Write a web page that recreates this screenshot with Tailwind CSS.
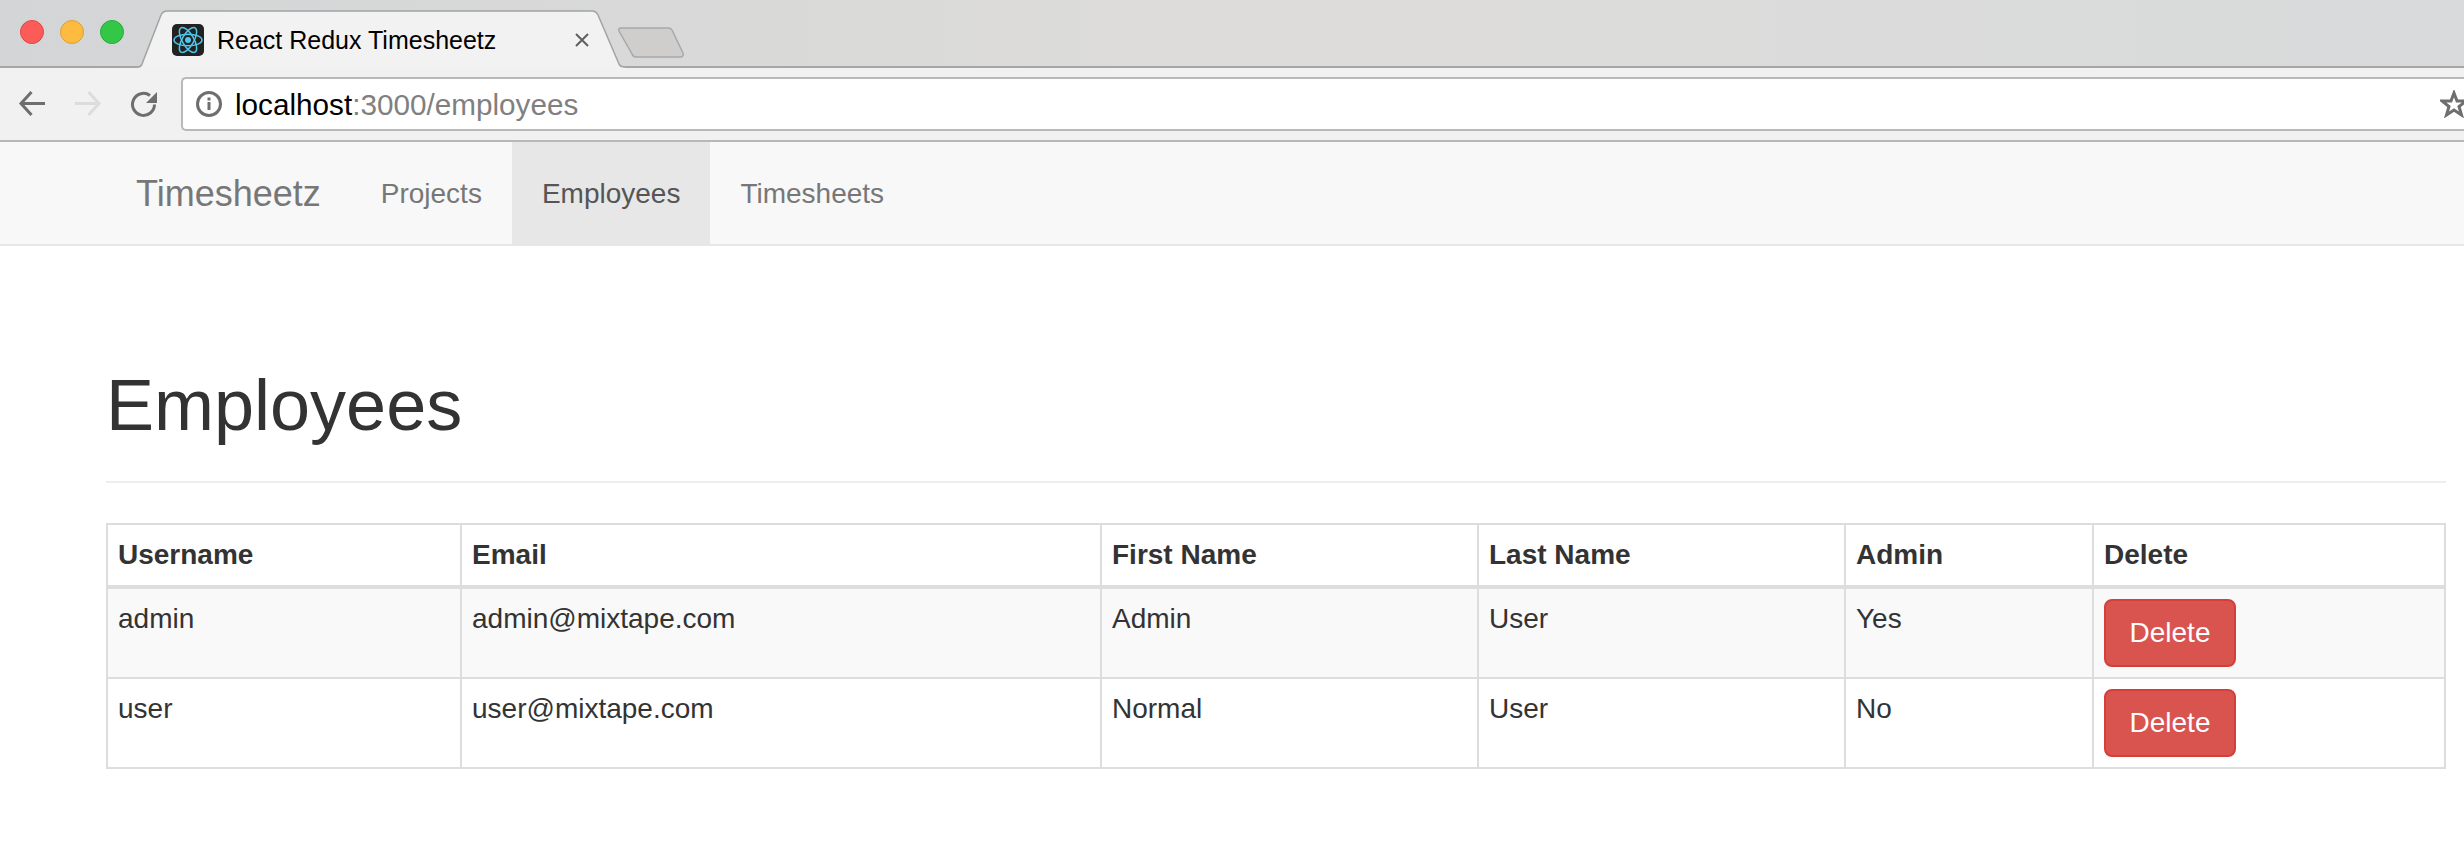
<!DOCTYPE html>
<html lang="en">
<head>
  <meta charset="UTF-8" />
  <title>React Redux Timesheetz</title>
  <script src="https://cdn.jsdelivr.net/npm/@tailwindcss/browser@4"></script>
</head>
<body class="bg-white h-[868px] overflow-hidden font-['Liberation_Sans',Arial,sans-serif] text-[#333] text-[28px] leading-[40px]">

  <!-- tab strip -->
  <div class="relative h-[68px] border-b-2 border-[#a6a6a6] bg-gradient-to-r from-[#d3d5d6] via-[#dddcda] to-[#d8dadb]">
    <div class="absolute left-[20px] top-[20px] flex gap-[16px]">
      <span class="w-[24px] h-[24px] rounded-full bg-[#fc5b57] border border-[#df4744]"></span>
      <span class="w-[24px] h-[24px] rounded-full bg-[#fdbc40] border border-[#dea034]"></span>
      <span class="w-[24px] h-[24px] rounded-full bg-[#33c748] border border-[#27aa35]"></span>
    </div>
    <svg class="absolute left-[138px] top-[10px]" width="490" height="58" viewBox="0 0 490 58">
      <path d="M0 58 V57 Q3 57 4 54 L23 5 Q25 1 29 1 L454 1 Q458 1 460 5 L481 54 Q482 57 487 57 V58 Z" fill="#f2f2f2"/>
      <path d="M0 57 Q3 57 4 54 L23 5 Q25 1 29 1 L454 1 Q458 1 460 5 L481 54 Q482 57 487 57" fill="none" stroke="#a3a3a3" stroke-width="1.5"/>
    </svg>
    <svg class="absolute left-[616px] top-[26px]" width="68" height="34" viewBox="0 0 68 34">
      <path d="M3 5 Q2 2 5 2 L52 2 Q55 2 56 4 L67 27 Q68 31 64 31 L20 31 Q17 31 16 28 Z" fill="#cfcecd" stroke="#a8a8a8" stroke-width="1.5"/>
    </svg>
    <div class="absolute left-[172px] top-[24px] w-[32px] h-[32px] rounded-[5px] bg-[#222] flex items-center justify-center">
      <svg width="30" height="30" viewBox="0 0 30 30" fill="none" stroke="#50c8ee" stroke-width="1.5">
        <ellipse cx="15" cy="15" rx="14" ry="5.800"/>
        <ellipse cx="15" cy="15" rx="14" ry="5.800" transform="rotate(60 15 15)"/>
        <ellipse cx="15" cy="15" rx="14" ry="5.800" transform="rotate(120 15 15)"/>
        <circle cx="15" cy="15" r="3" fill="#50c8ee" stroke="none"/>
      </svg>
    </div>
    <span class="absolute left-[217px] top-[20px] text-[25px] text-black whitespace-nowrap">React Redux Timesheetz</span>
    <svg class="absolute left-[575px] top-[33px]" width="14" height="14" viewBox="0 0 14 14" stroke="#5f5f5f" stroke-width="2" fill="none">
      <path d="M1 1 L13 13 M13 1 L1 13"/>
    </svg>
  </div>

  <!-- toolbar -->
  <div class="relative h-[74px] bg-[#f1f1f1] border-b-2 border-[#b8b8b8] flex items-center">
    <div class="flex items-center w-[181px] shrink-0 pl-[18px] gap-[28px]">
      <svg width="28" height="28" viewBox="0 0 28 28" fill="none" stroke="#6e6e6e" stroke-width="3">
        <path d="M27 13.500 H3 M13.500 2 L3 13.500 L13.500 25"/>
      </svg>
      <svg width="28" height="28" viewBox="0 0 28 28" fill="none" stroke="#dcdcdc" stroke-width="3">
        <path d="M1 13.500 H25 M14.500 2 L25 13.500 L14.500 25"/>
      </svg>
      <svg width="28" height="28" viewBox="0 0 28 28" fill="none" stroke="#6e6e6e" stroke-width="3">
        <path d="M24.500 14.500 A11 11 0 1 1 20 5.500"/>
        <path d="M27 2 V13 H16 Z" fill="#6e6e6e" stroke="none"/>
      </svg>
    </div>
    <div class="flex-1 h-[54px] bg-white border-2 border-r-0 border-[#b9b9b9] rounded-l-[5px] flex items-center pl-[12px] relative">
      <svg width="28" height="28" viewBox="0 0 28 28" fill="none" class="shrink-0">
        <circle cx="14" cy="14" r="11.500" stroke="#6e6e6e" stroke-width="3"/>
        <rect x="12.500" y="12" width="3" height="8" fill="#6e6e6e"/>
        <rect x="12.500" y="7.500" width="3" height="3" fill="#6e6e6e"/>
      </svg>
      <span class="ml-[12px] mt-[2px] text-[29.7px] text-black whitespace-nowrap">localhost<span class="text-[#808080]">:3000/employees</span></span>
      <svg class="absolute left-[2257px] top-[11px]" width="28" height="28" viewBox="0 0 28 28" fill="none" stroke="#6e6e6e" stroke-width="3">
        <path d="M14 3 L17 11 L26 11 L19 16.500 L21.500 25 L14 20 L6.500 25 L9 16.500 L2 11 L11 11 Z"/>
      </svg>
    </div>
  </div>

  <!-- navbar -->
  <nav class="h-[104px] bg-[#f8f8f8] border-b-2 border-[#e7e7e7] pl-[106px] flex">
    <a class="px-[30px] pt-[2px] flex items-center text-[36px] text-[#777]">Timesheetz</a>
    <a class="px-[30px] pt-[2px] flex items-center text-[#777]">Projects</a>
    <a class="px-[30px] pt-[2px] flex items-center text-[#555] bg-[#e7e7e7]">Employees</a>
    <a class="px-[30px] pt-[2px] flex items-center text-[#777]">Timesheets</a>
  </nav>

  <main class="px-[106px] pr-[18px]">
    <div class="pt-[119px] pb-[36px] border-b-2 border-[#eee]">
      <h1 class="text-[72px] leading-[80px]">Employees</h1>
    </div>

    <table class="mt-[40px] w-[2340px] table-fixed border-collapse">
      <colgroup>
        <col class="w-[354px]" />
        <col class="w-[640px]" />
        <col class="w-[377px]" />
        <col class="w-[367px]" />
        <col class="w-[248px]" />
        <col class="w-[352px]" />
      </colgroup>
      <thead>
        <tr class="font-bold text-left">
          <th class="border-2 border-b-4 border-[#ddd] p-[10px] align-bottom">Username</th>
          <th class="border-2 border-b-4 border-[#ddd] p-[10px] align-bottom">Email</th>
          <th class="border-2 border-b-4 border-[#ddd] p-[10px] align-bottom">First Name</th>
          <th class="border-2 border-b-4 border-[#ddd] p-[10px] align-bottom">Last Name</th>
          <th class="border-2 border-b-4 border-[#ddd] p-[10px] align-bottom">Admin</th>
          <th class="border-2 border-b-4 border-[#ddd] p-[10px] align-bottom">Delete</th>
        </tr>
      </thead>
      <tbody>
        <tr class="bg-[#f9f9f9]">
          <td class="border-2 border-[#ddd] p-[10px] align-top">admin</td>
          <td class="border-2 border-[#ddd] p-[10px] align-top">admin@mixtape.com</td>
          <td class="border-2 border-[#ddd] p-[10px] align-top">Admin</td>
          <td class="border-2 border-[#ddd] p-[10px] align-top">User</td>
          <td class="border-2 border-[#ddd] p-[10px] align-top">Yes</td>
          <td class="border-2 border-[#ddd] p-[10px] align-top"><button class="block w-[132px] h-[68px] rounded-[8px] bg-[#d9534f] border-2 border-[#d43f3a] text-white">Delete</button></td>
        </tr>
        <tr>
          <td class="border-2 border-[#ddd] p-[10px] align-top">user</td>
          <td class="border-2 border-[#ddd] p-[10px] align-top">user@mixtape.com</td>
          <td class="border-2 border-[#ddd] p-[10px] align-top">Normal</td>
          <td class="border-2 border-[#ddd] p-[10px] align-top">User</td>
          <td class="border-2 border-[#ddd] p-[10px] align-top">No</td>
          <td class="border-2 border-[#ddd] p-[10px] align-top"><button class="block w-[132px] h-[68px] rounded-[8px] bg-[#d9534f] border-2 border-[#d43f3a] text-white">Delete</button></td>
        </tr>
      </tbody>
    </table>
  </main>
</body>
</html>
